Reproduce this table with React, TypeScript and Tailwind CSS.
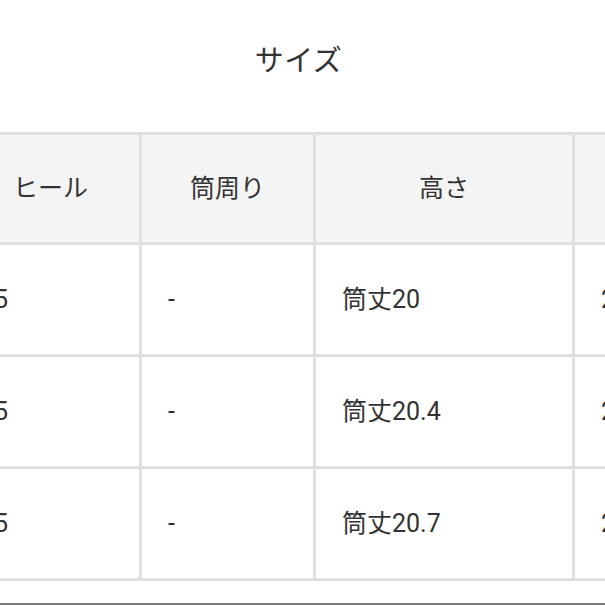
import React from "react";

const font = { fontFamily: 'Roboto, "Noto Sans CJK JP", "Noto Sans", sans-serif' };

const rows = [
  ["5", "-", "筒丈20", "2"],
  ["5", "-", "筒丈20.4", "2"],
  ["5", "-", "筒丈20.7", "2"],
];

export default function App() {
  return (
    <div
      className="w-[605px] h-[605px] overflow-hidden bg-white flex flex-col text-[#333]"
      style={font}
    >
      <div className="h-[132px] shrink-0 flex items-center justify-center pb-[10px] pr-[8px]">
        <h1 className="text-[29px] leading-none font-normal tracking-[0.5px]">サイズ</h1>
      </div>
      <div className="ml-[-41px] shrink-0">
        <table className="table-fixed border-collapse w-[860px]">
          <colgroup>
            <col className="w-[180px]" />
            <col className="w-[174px]" />
            <col className="w-[259px]" />
            <col className="w-[247px]" />
          </colgroup>
          <thead>
            <tr className="h-[110px] bg-[#f4f4f4]">
              {["ヒール", "筒周り", "高さ", "サイズ"].map((h, i) => (
                <th
                  key={i}
                  className="border-[3px] border-[#e0e0e0] text-center font-normal text-[25px] leading-none"
                >
                  {h}
                </th>
              ))}
            </tr>
          </thead>
          <tbody>
            {rows.map((r, ri) => (
              <tr key={ri} className="h-[112px]">
                {r.map((c, ci) => (
                  <td
                    key={ci}
                    className={
                      ci === 0
                        ? "border-[3px] border-[#e0e0e0] text-left pl-[32px] text-[25px] leading-none"
                        : "border-[3px] border-[#e0e0e0] text-left pl-[26px] text-[25px] leading-none"
                    }
                  >
                    {c}
                  </td>
                ))}
              </tr>
            ))}
          </tbody>
        </table>
      </div>
      <div className="mt-auto h-[2px] bg-[#7a7a7a] shrink-0" />
    </div>
  );
}
